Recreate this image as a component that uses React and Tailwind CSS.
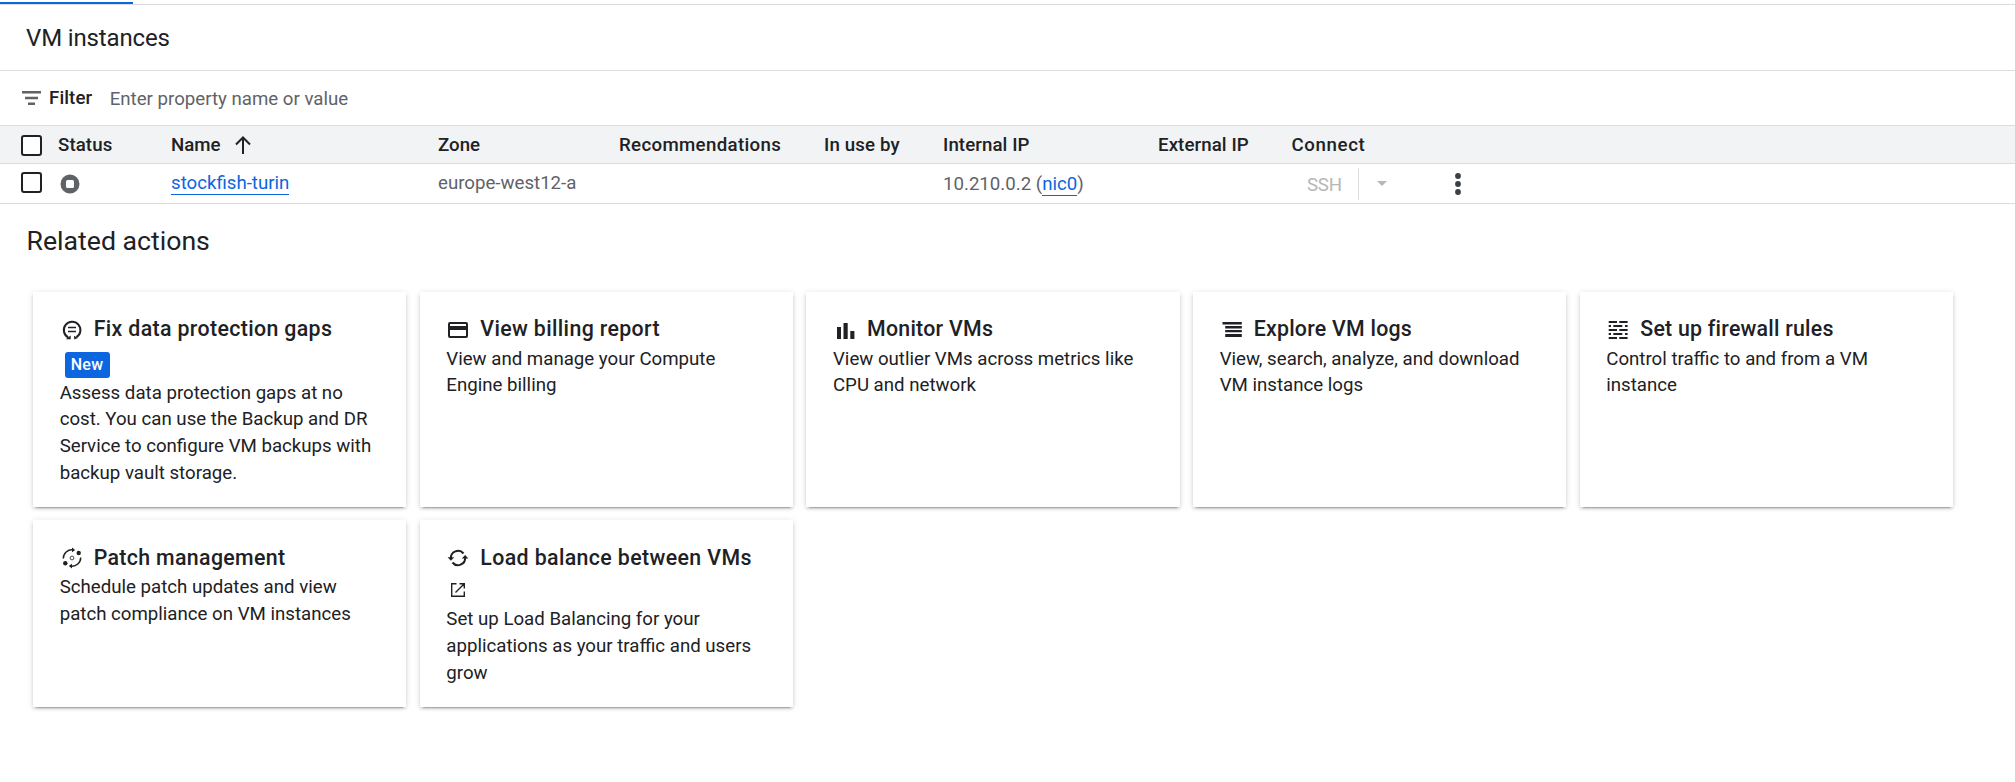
import React from "react";

const GRID =
  "grid grid-cols-[37px_113px_267px_181px_205px_119px_215px_133.4px_157px_1fr] pl-[21px]";

function Svg({ children, className = "", box = "0 0 24 24" }) {
  return (
    <svg viewBox={box} fill="currentColor" className={"shrink-0 " + className}>
      {children}
    </svg>
  );
}

function Checkbox({ className = "" }) {
  return <span className={"block size-[21px] rounded-[3px] border-2 border-[#202124] bg-white " + className} />;
}

const icons = {
  gaps: (
    <Svg box="0 0 20 20" className="size-5">
      <path d="M6.200 17.400A8.300 8.300 0 1 1 14.400 17.200" fill="none" stroke="currentColor" strokeWidth="2" />
      <path d="M3.800 19.200h4.900v-3.800zM11.900 15.800l.4 3.700 3.600-1.500z" />
      <path d="M6 6.700h8v1.600H6zM6 10.700h8v1.600H6z" />
    </Svg>
  ),
  billing: (
    <Svg box="0 0 20 20" className="size-5">
      <path d="M2 2h16a2 2 0 0 1 2 2v12a2 2 0 0 1-2 2H2a2 2 0 0 1-2-2V4a2 2 0 0 1 2-2zm0 2v2h16V4zm0 6v6h16v-6z" fillRule="evenodd" />
    </Svg>
  ),
  bars: (
    <Svg box="0 0 20 20" className="size-5">
      <path d="M2 7h4v12H2zM8.500 3h4.200v16H8.500zM15.300 11h4.100v8h-4.100z" />
    </Svg>
  ),
  logs: (
    <Svg box="0 0 20 20" className="size-5">
      <path d="M.5 2h19.300v2.600H.5zM3.200 6.100h16.600v2.300H3.200zM3.200 10h16.600v2.300H3.200zM3.200 14h16.600v3H3.200z" />
    </Svg>
  ),
  wall: (
    <Svg box="0 0 20 20" className="size-5">
      <path d="M.7 1h8.300v2H.7zM11.300 1h8.300v2h-8.300zM.7 5h2.300v2H.7zM5.300 5h9v2h-9zM17 5h2.600v2H17zM.7 9h8.300v2H.7zM11.300 9h8.300v2h-8.300zM.7 13h2.300v2H.7zM5.300 13h9v2h-9zM17 13h2.600v2H17zM.7 17h8.300v2H.7zM11.300 17h8.300v2h-8.300z" />
    </Svg>
  ),
  patch: (
    <Svg box="0 0 20 20" className="size-5 overflow-visible">
      <path d="M1.300 10.500A8.700 8.700 0 0 1 11 1.800M18.700 9.500A8.700 8.700 0 0 1 9 18.200" fill="none" stroke="currentColor" strokeWidth="1.500" />
      <path d="M10 -.4 13.200 1.900 10 4.200zM10 15.800 6.800 18.100 10 20.400z" />
      <circle cx="16.700" cy="5" r="2.200" />
      <circle cx="3.300" cy="15.300" r="2.200" />
      <circle cx="10" cy="10" r="1.900" fill="none" stroke="currentColor" strokeWidth=".8" />
    </Svg>
  ),
  balance: (
    <Svg box="0 0 20 20" className="size-5 overflow-visible">
      <path d="M2.900 10.500A7.100 7.100 0 0 1 15.500 5.500M17.100 9.500A7.100 7.100 0 0 1 4.500 14.500" fill="none" stroke="currentColor" strokeWidth="2" />
      <path d="M-.4 9.300H6.200L2.900 12.700zM13.800 10.400h6.600L17.100 7z" />
    </Svg>
  ),
};

const cards = [
  {
    icon: "gaps",
    title: "Fix data protection gaps",
    tracking: "tracking-[0.36px]",
    badge: "New",
    lines: ["Assess data protection gaps at no", "cost. You can use the Backup and DR", "Service to configure VM backups with", "backup vault storage."],
  },
  { icon: "billing", title: "View billing report", tracking: "tracking-[0.36px]", lines: ["View and manage your Compute", "Engine billing"] },
  { icon: "bars", title: "Monitor VMs", tracking: "tracking-[0.27px]", lines: ["View outlier VMs across metrics like", "CPU and network"] },
  { icon: "logs", title: "Explore VM logs", tracking: "tracking-[0.25px]", lines: ["View, search, analyze, and download", "VM instance logs"] },
  { icon: "wall", title: "Set up firewall rules", tracking: "tracking-[0.24px]", lines: ["Control traffic to and from a VM", "instance"] },
  { icon: "patch", title: "Patch management", tracking: "tracking-[0.34px]", lines: ["Schedule patch updates and view", "patch compliance on VM instances"] },
  {
    icon: "balance",
    title: "Load balance between VMs",
    tracking: "tracking-[0.38px]",
    external: true,
    lines: ["Set up Load Balancing for your", "applications as your traffic and users", "grow"],
  },
];

function Card({ card }) {
  return (
    <article className="bg-white px-[26.67px] pt-[23.2px] shadow-[0_4px_1.33px_-2.67px_rgba(0,0,0,0.2),0_2.67px_2.67px_0_rgba(0,0,0,0.14),0_1.33px_6.67px_0_rgba(0,0,0,0.12)]">
      <h3 className={"flex h-[30.6px] items-start text-[21.33px] leading-[28px] font-medium whitespace-nowrap " + card.tracking}>
        <span className="mt-[4.8px] mr-[12px] ml-[2px] flex">{icons[card.icon]}</span>
        {card.title}
      </h3>
      {card.badge && (
        <div className="flex h-[34px] items-start pt-[6.2px] pl-[5px]">
          <span className="flex h-[26px] items-center rounded-[3px] bg-[#0b66e0] px-[6px] text-[16px] font-medium tracking-[0.35px] text-white">
            {card.badge}
          </span>
        </div>
      )}
      {card.external && (
        <div className="flex h-[32.3px] items-start pt-[8.9px] pl-[4.67px]">
          <Svg box="0 0 14 14" className="size-[14px]">
            <path d="M5.500 .7H.7v12.600h12.600V8.500M8.500 .7h4.800v4.800M13 1 4.500 9.500" fill="none" stroke="currentColor" strokeWidth="1.400" />
          </Svg>
        </div>
      )}
      <p className="text-[18.67px] leading-[26.67px] whitespace-nowrap">
        {card.lines.map((l) => (
          <span key={l} className="block">{l}</span>
        ))}
      </p>
    </article>
  );
}

export default function App() {
  return (
    <main className="h-[782px] overflow-hidden bg-white font-[Roboto,'Liberation_Sans',sans-serif] text-[#202124]">
      <div className="flex h-[5px] flex-col justify-end border-b border-[#dadce0]">
        <div className="h-[2px] w-[133px] bg-[#0b66e0]" />
      </div>
      <header className="flex h-[66px] items-center border-b border-[#dadce0] pl-[26px]">
        <h1 className="text-[24px] tracking-[-0.14px]">VM instances</h1>
      </header>
      <div className="flex h-[55px] items-center border-b border-[#dadce0] pl-[21.5px] text-[18.67px]">
        <Svg box="0 0 19 14" className="h-[14px] w-[19px] text-[#5f6368]">
          <path d="M0 0h19v2.500H0zM3 5.700h13v2.500H3zM6 11.400h7V14H6z" />
        </Svg>
        <span className="ml-[8.5px] font-medium tracking-[0.1px]">Filter</span>
        <span className="mt-[2px] ml-[17.5px] text-[#5f6368]">Enter property name or value</span>
      </div>
      <section className="text-[18.67px]">
        <div className={GRID + " h-[38px] items-center border-b border-[#dadce0] bg-[#f1f3f4] font-medium"}>
          <Checkbox className="mt-[2px]" />
          <span className="tracking-[0.1px]">Status</span>
          <span className="flex items-center">
            Name
            <Svg box="0 0 16 18" className="ml-[14px] h-[18px] w-4">
              <path d="M8 18V1.500M1 8.500 8 1.500l7 7" fill="none" stroke="currentColor" strokeWidth="2" />
            </Svg>
          </span>
          <span>Zone</span>
          <span className="tracking-[0.34px]">Recommendations</span>
          <span className="tracking-[0.15px]">In use by</span>
          <span className="tracking-[0.1px]">Internal IP</span>
          <span className="tracking-[0.1px]">External IP</span>
          <span className="tracking-[0.65px]">Connect</span>
        </div>
        <div className={GRID + " h-[40px] items-center border-b border-[#dadce0] text-[#5f6368]"}>
          <Checkbox className="mb-[2px]" />
          <Svg box="0 0 20 20" className="ml-[2px] size-5">
            <path fillRule="evenodd" d="M10 .5a9.500 9.500 0 1 1 0 19 9.500 9.500 0 0 1 0-19zM7.500 6A1.500 1.500 0 0 0 6 7.500v5A1.500 1.500 0 0 0 7.500 14h5a1.500 1.500 0 0 0 1.500-1.500v-5A1.500 1.500 0 0 0 12.500 6z" />
          </Svg>
          <span className="mb-[2px]">
            <a className="inline-block border-b border-[#0b66e0] leading-[21px] text-[#0b66e0]">stockfish-turin</a>
          </span>
          <span className="mb-[2px]">europe-west12-a</span>
          <span />
          <span />
          <span>
            10.210.0.2 (<a className="inline-block border-b border-[#0b66e0] leading-[21px] text-[#0b66e0]">nic0</a>)
          </span>
          <span />
          <span className="flex items-center pl-[15.6px] text-[#b5b7b9]">
            <span className="mt-[2px] tracking-[-0.2px]">SSH</span>
            <span className="ml-[16px] h-[32px] w-px bg-[#dadce0]" />
            <Svg box="0 0 10 5" className="mb-px ml-[18px] h-[5px] w-[10px]">
              <path d="M0 0h10L5 5z" />
            </Svg>
          </span>
          <Svg box="0 0 6 22" className="ml-[6.6px] h-[22px] w-[6px] text-[#3c4043]">
            <circle cx="3" cy="3" r="2.900" />
            <circle cx="3" cy="11" r="2.900" />
            <circle cx="3" cy="19" r="2.900" />
          </Svg>
        </div>
      </section>
      <h2 className="mt-[21px] pl-[26.5px] text-[26.67px] leading-[32px]">Related actions</h2>
      <section className="mt-[35px] ml-[33px] grid grid-cols-[repeat(5,373.33px)] grid-rows-[215px_187px] gap-[13.33px]">
        {cards.map((c) => (
          <Card key={c.title} card={c} />
        ))}
      </section>
    </main>
  );
}
